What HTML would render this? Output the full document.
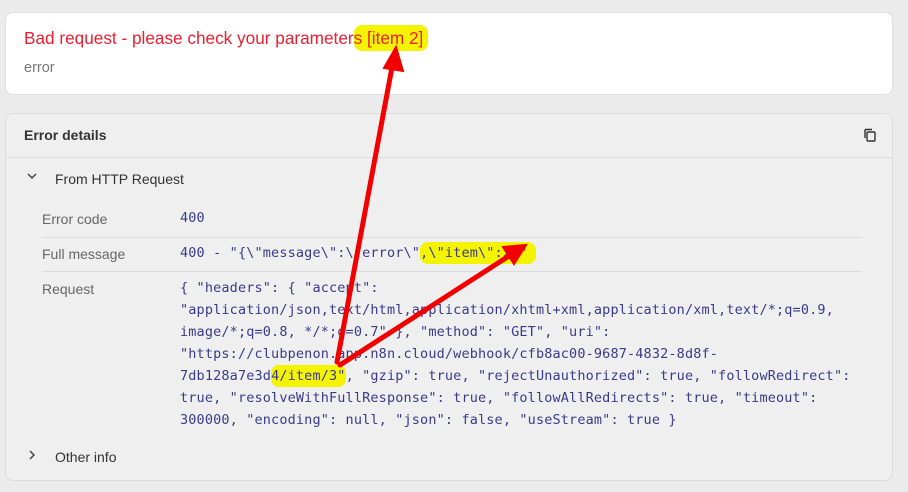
<!DOCTYPE html>
<html><head><style>
body{margin:0;width:908px;height:492px;background:#ebebeb;font-family:"Liberation Sans",sans-serif;position:relative;overflow:hidden}
.c1{position:absolute;left:5px;top:12px;width:886px;height:81px;background:#fff;border:1px solid #e0e0e0;border-radius:8px}
.t1{position:absolute;left:18px;top:15px;font-size:17.2px;color:#ea1f30}
.t2{position:absolute;left:18px;top:47px;font-size:14.5px;color:#777}
.c2{position:absolute;left:5px;top:113px;width:886px;height:366px;background:#efefef;border:1px solid #dcdcdc;border-radius:8px}
.hd{position:absolute;left:0;top:0;width:886px;height:43px;border-bottom:1px solid #dcdcdc}
.hd span{position:absolute;left:18px;top:13px;font-size:14px;font-weight:bold;color:#333}
.lab{position:absolute;font-size:14px;color:#666}
.mono{position:absolute;font-family:"DejaVu Sans Mono",monospace;font-size:13.5px;letter-spacing:0.15px;color:#3a3a8c;line-height:22px;white-space:pre}
.hl{background:#f4f400;border-radius:8px;padding:3px 0}
.sep{position:absolute;left:36px;width:820px;height:1px;background:#dcdcdc}
</style></head><body>
<div class="c1"><div class="t1">Bad request - please check your parameter<span class="hl">s [item 2]&nbsp;</span></div><div class="t2">error</div></div>
<div class="c2">
<div class="hd"><span>Error details</span>
<svg style="position:absolute;left:857px;top:14px" width="14" height="14" viewBox="0 0 14 14" fill="none" stroke="#333" stroke-width="1.4"><rect x="4" y="4" width="8" height="9" rx="1"/><path d="M2 10V2.5a1 1 0 0 1 1-1h6"/></svg></div>
<svg style="position:absolute;left:21px;top:58px" width="10" height="8"><path d="M1 2l4 4 4-4" fill="none" stroke="#444" stroke-width="1.5"/></svg>
<div class="lab" style="left:49px;top:57px;color:#333">From HTTP Request</div>
<div class="lab" style="left:36px;top:97px">Error code</div>
<div class="mono" style="left:174px;top:93px">400</div>
<div class="sep" style="top:123px"></div>
<div class="lab" style="left:36px;top:132px">Full message</div>
<div class="mono" style="left:174px;top:128px">400 - "{\"message\":\"error\"<span class="hl">,\"item\":2}"&nbsp;</span></div>
<div class="sep" style="top:157px"></div>
<div class="lab" style="left:36px;top:167px">Request</div>
<div class="mono" style="left:174px;top:163px">{ "headers": { "accept":
"application/json,text/html,application/xhtml+xml,application/xml,text/*;q=0.9,
image/*;q=0.8, */*;q=0.7" }, "method": "GET", "uri":
"https://clubpenon.app.n8n.cloud/webhook/cfb8ac00-9687-4832-8d8f-
7db128a7e3d<span class="hl">4/item/3"</span>, "gzip": true, "rejectUnauthorized": true, "followRedirect":
true, "resolveWithFullResponse": true, "followAllRedirects": true, "timeout":
300000, "encoding": null, "json": false, "useStream": true }</div>
<svg style="position:absolute;left:22px;top:336px" width="8" height="10"><path d="M2 1l4 4-4 4" fill="none" stroke="#444" stroke-width="1.5"/></svg>
<div class="lab" style="left:49px;top:335px;color:#333">Other info</div>
</div>
<svg style="position:absolute;left:0;top:0" width="908" height="492">
<g stroke="#f20000" stroke-width="5" fill="#f20000" stroke-linecap="round">
<line x1="337" y1="362" x2="393" y2="62"/>
<polygon points="396,47 384,68 403,71" stroke-width="2"/>
<line x1="340" y1="365" x2="512" y2="254"/>
<polygon points="526,245 503,247 514,264" stroke-width="2"/>
</g></svg>
</body></html>
